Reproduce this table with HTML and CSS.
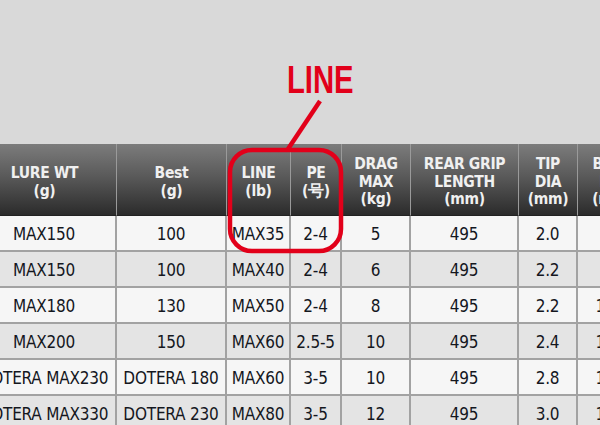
FILE: index.html
```html
<!DOCTYPE html>
<html lang="en">
<head>
<meta charset="utf-8">
<title>Spec table</title>
<link rel="stylesheet" href="styles.css">
</head>
<body>
<div class="page">
  <div class="top"></div>
  <div class="table-wrap">
    <table class="spec">
      <colgroup>
        <col class="c-lure"><col class="c-best"><col class="c-line"><col class="c-pe"><col class="c-drag"><col class="c-grip"><col class="c-tip"><col class="c-butt">
      </colgroup>
      <thead>
        <tr>
          <th>LURE WT<br>(g)</th>
          <th>Best<br>(g)</th>
          <th>LINE<br>(lb)</th>
          <th>PE<br>(号)</th>
          <th>DRAG<br>MAX<br>(kg)</th>
          <th>REAR GRIP<br>LENGTH<br>(mm)</th>
          <th>TIP<br>DIA<br>(mm)</th>
          <th>BUTT<br>DIA<br>(mm)</th>
        </tr>
      </thead>
      <tbody>
        <tr><td>MAX150</td><td>100</td><td>MAX35</td><td>2-4</td><td>5</td><td>495</td><td>2.0</td><td>9.8</td></tr>
        <tr class="alt"><td>MAX150</td><td>100</td><td>MAX40</td><td>2-4</td><td>6</td><td>495</td><td>2.2</td><td>9.8</td></tr>
        <tr><td>MAX180</td><td>130</td><td>MAX50</td><td>2-4</td><td>8</td><td>495</td><td>2.2</td><td>10.5</td></tr>
        <tr class="alt"><td>MAX200</td><td>150</td><td>MAX60</td><td>2.5-5</td><td>10</td><td>495</td><td>2.4</td><td>11.0</td></tr>
        <tr><td>DOTERA MAX230</td><td>DOTERA 180</td><td>MAX60</td><td>3-5</td><td>10</td><td>495</td><td>2.8</td><td>11.5</td></tr>
        <tr class="alt"><td>DOTERA MAX330</td><td>DOTERA 230</td><td>MAX80</td><td>3-5</td><td>12</td><td>495</td><td>3.0</td><td>12.0</td></tr>
      </tbody>
    </table>
  </div>
  <div class="callout">
    <span class="callout-label">LINE</span>
    <svg class="callout-shape" width="600" height="425" viewBox="0 0 600 425" aria-hidden="true">
      <line x1="320" y1="101" x2="288" y2="149" stroke="#e2001a" stroke-width="4.5"/>
      <rect x="230" y="150" width="111" height="101" rx="22" ry="22" fill="none" stroke="#e2001a" stroke-width="4.5"/>
    </svg>
  </div>
</div>
</body>
</html>
```
FILE: styles.css
```css
html, body {
  margin: 0;
  padding: 0;
  background: #d9d9d9;
}

.page {
  position: relative;
  width: 600px;
  height: 425px;
  overflow: hidden;
  background: #d9d9d9;
}

.top {
  height: 144px;
}

.table-wrap {
  width: 600px;
  overflow: hidden;
}

.spec {
  margin-left: -27px;
  width: 675px;
  table-layout: fixed;
  border-collapse: separate;
  border-spacing: 0;
  font-family: "DejaVu Sans Condensed", "DejaVu Sans", sans-serif;
  font-stretch: semi-condensed;
}

.c-lure { width: 144px; }
.c-best { width: 110px; }
.c-line { width: 64px; }
.c-pe { width: 51px; }
.c-drag { width: 69px; }
.c-grip { width: 108px; }
.c-tip { width: 59px; }
.c-butt { width: 70px; }

.spec th {
  height: 72px;
  padding: 6px 0 0;
  box-sizing: border-box;
  background: linear-gradient(#7c7c7c, #5a5a5a 45%, #2b2b2b);
  color: #f0f0f0;
  font-weight: bold;
  font-size: 15.5px;
  line-height: 17.5px;
  letter-spacing: -0.3px;
  text-align: center;
  vertical-align: middle;
  border-right: 1px solid #9a9a9a;
  border-bottom: 1px solid #222;
  white-space: nowrap;
}

.spec td {
  height: 36px;
  padding: 2px 0 0;
  box-sizing: border-box;
  background: #f6f6f6;
  color: #14171e;
  font-size: 17px;
  text-align: center;
  vertical-align: middle;
  border-right: 2px solid #a2a2a2;
  border-bottom: 2px solid #a2a2a2;
  white-space: nowrap;
  letter-spacing: -0.2px;
}

.spec tr.alt td {
  background: #e4e4e4;
}

.callout {
  position: absolute;
  left: 0;
  top: 0;
  width: 600px;
  height: 425px;
  pointer-events: none;
}

.callout-shape {
  position: absolute;
  left: 0;
  top: 0;
}

.callout-label {
  position: absolute;
  left: 287px;
  top: 58px;
  display: inline-block;
  font-family: "Liberation Sans", Arial, sans-serif;
  font-weight: bold;
  font-size: 39px;
  line-height: 44px;
  color: #e2001a;
  transform: scaleX(0.75);
  transform-origin: left top;
  letter-spacing: 0;
}
```
